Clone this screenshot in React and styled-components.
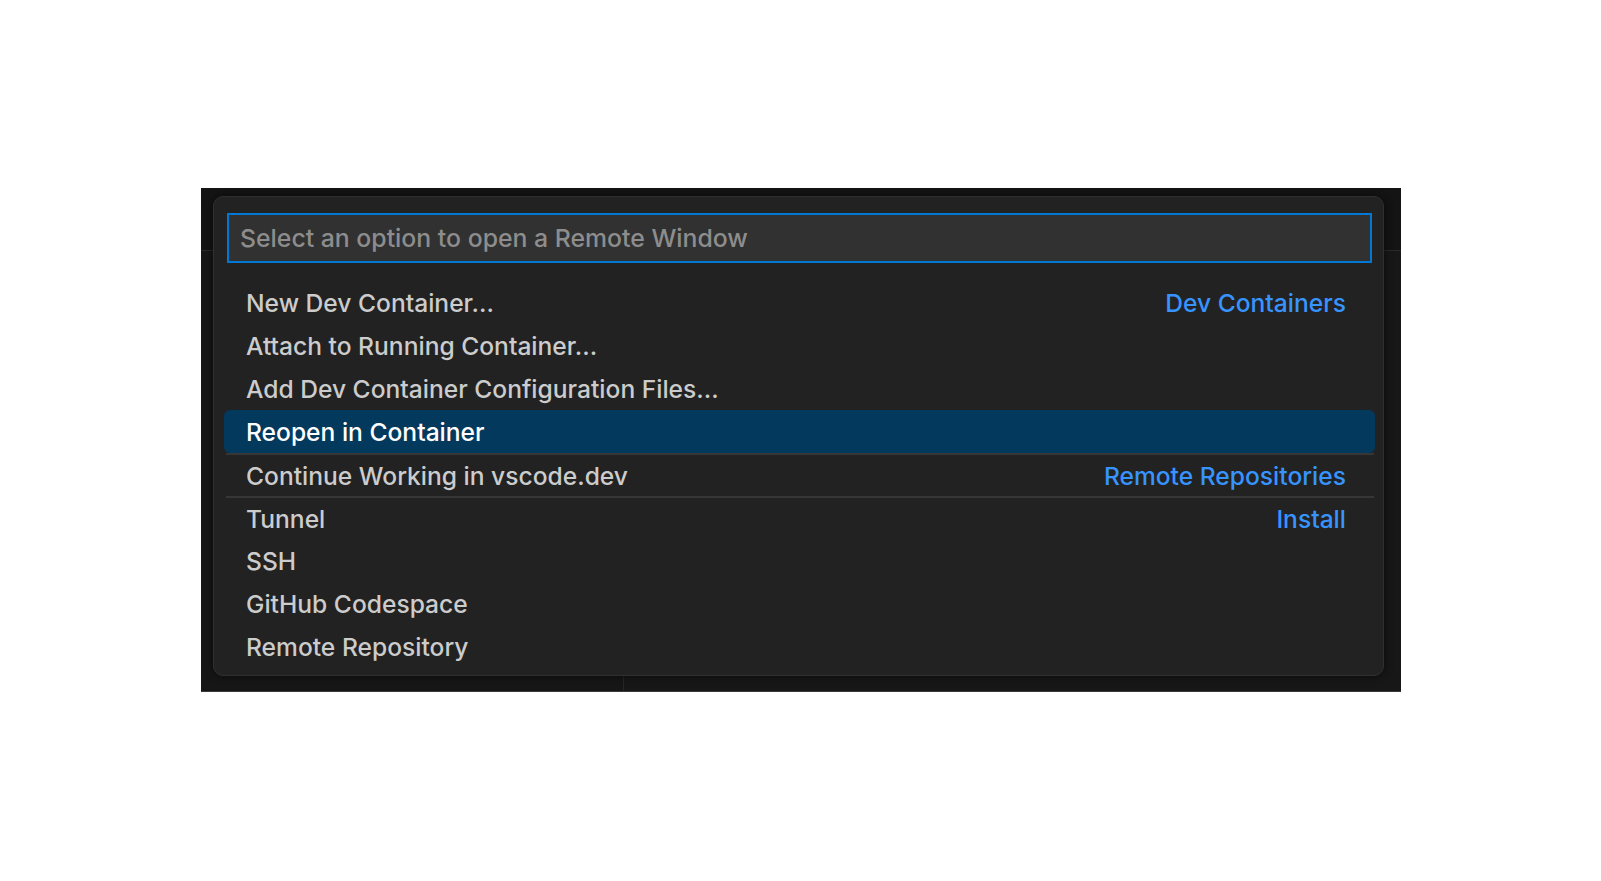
import React from "react";
import styled, { createGlobalStyle } from "styled-components";

const Global = createGlobalStyle`
  html, body { margin: 0; padding: 0; background: #ffffff; }
  body { font-family: Inter, "Noto Sans", sans-serif; }
`;

const Page = styled.div`
  width: 1601px;
  height: 881px;
  padding: 188px 0 0 201px;
  box-sizing: border-box;
`;

const Window = styled.div`
  position: relative;
  width: 1200px;
  height: 504px;
  background: #161616;
  border-bottom: 1px solid #3a3a3a;
  box-sizing: border-box;
  display: grid;
  grid-template-rows: 63px 1fr;
`;

const TitleBar = styled.div`
  background: #141414;
  border-bottom: 1px solid #2a2a2a;
`;

const Body = styled.div`
  display: grid;
  grid-template-columns: 423px 1fr;
`;

const Sidebar = styled.div`
  background: #161616;
  border-right: 1px solid #262626;
`;

const Editor = styled.div`
  background: #171717;
`;

const QuickPick = styled.div`
  position: absolute;
  left: 12px;
  top: 8px;
  width: 1171px;
  height: 480px;
  box-sizing: border-box;
  background: #222222;
  border: 1px solid #303030;
  border-radius: 10px;
  box-shadow: 0 0 8px rgba(0, 0, 0, 0.6);
  padding: 16px 8px 6px 10px;
  display: flex;
  flex-direction: column;
`;

const InputBox = styled.div`
  margin: 0 3px 0 3px;
  height: 50px;
  box-sizing: border-box;
  background: #313131;
  border: 2px solid #0078d4;
  display: flex;
  align-items: center;
  padding-left: 11px;
  font-size: 24.8px;
  font-weight: 500;
  color: #8d8d8d;
`;

const List = styled.div`
  margin-top: 18px;
  display: flex;
  flex-direction: column;
`;

const Row = styled.div`
  height: 43px;
  box-sizing: border-box;
  display: flex;
  align-items: center;
  justify-content: space-between;
  border-radius: ${(p) => (p.$selected ? "6px" : "0")};
  background: ${(p) => (p.$selected ? "#04395e" : "transparent")};
  color: ${(p) => (p.$selected ? "#ffffff" : "#cccccc")};
  font-size: 24.6px;
  font-weight: 500;
  border-top: ${(p) => (p.$separator ? "2px solid #363636" : "none")};
  margin: ${(p) => (p.$separator ? "0 1px 0 2px" : "0")};
  padding-left: ${(p) => (p.$separator ? "20px" : "22px")};
  padding-right: ${(p) => (p.$separator ? "28px" : "29px")};
`;

const Label = styled.span``;

const Desc = styled.span`
  color: #3794ff;
`;

const items = [
  { label: "New Dev Container...", desc: "Dev Containers" },
  { label: "Attach to Running Container..." },
  { label: "Add Dev Container Configuration Files..." },
  { label: "Reopen in Container", selected: true },
  { label: "Continue Working in vscode.dev", desc: "Remote Repositories", separator: true },
  { label: "Tunnel", desc: "Install", separator: true },
  { label: "SSH" },
  { label: "GitHub Codespace" },
  { label: "Remote Repository" },
];

export default function App() {
  return (
    <>
      <Global />
      <Page>
        <Window>
          <TitleBar />
          <Body>
            <Sidebar />
            <Editor />
          </Body>
          <QuickPick>
            <InputBox>Select an option to open a Remote Window</InputBox>
            <List>
              {items.map((it) => (
                <Row key={it.label} $selected={it.selected} $separator={it.separator}>
                  <Label>{it.label}</Label>
                  {it.desc && <Desc>{it.desc}</Desc>}
                </Row>
              ))}
            </List>
          </QuickPick>
        </Window>
      </Page>
    </>
  );
}
